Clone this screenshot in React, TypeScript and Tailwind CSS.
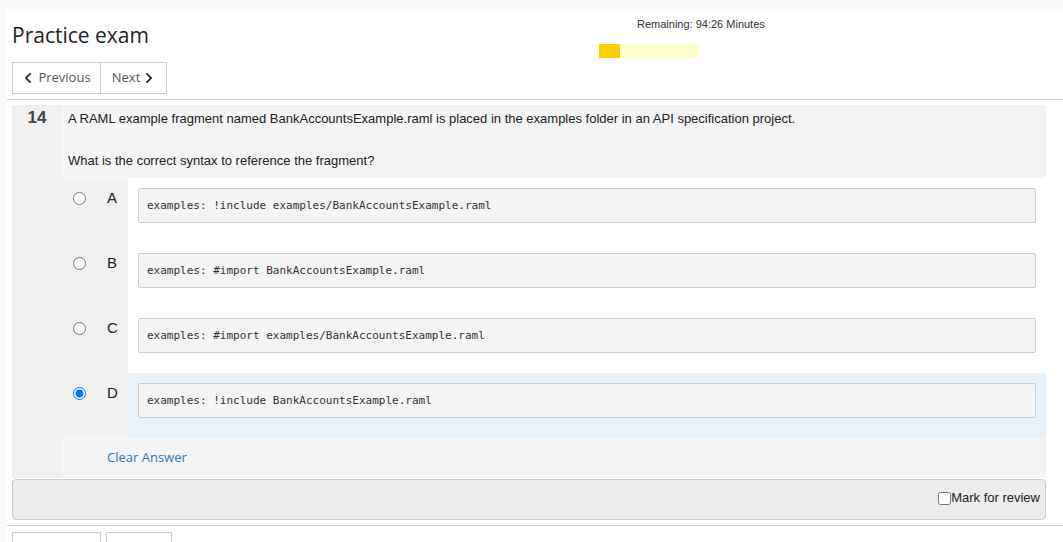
import { FaChevronLeft, FaChevronRight } from "react-icons/fa";

const options = [
  { key: "A", code: "examples: !include examples/BankAccountsExample.raml" },
  { key: "B", code: "examples: #import BankAccountsExample.raml" },
  { key: "C", code: "examples: #import examples/BankAccountsExample.raml" },
  { key: "D", code: "examples: !include BankAccountsExample.raml" },
];

const selected = "D";

function NavButtons() {
  return (
    <div className="flex font-['Open_Sans',sans-serif] text-[13px] text-[#555]">
      <button className="flex h-[32px] w-[89px] items-center justify-center gap-[4px] border border-[#ccc] bg-white">
        <FaChevronLeft className="text-[12px] text-[#333]" />
        Previous
      </button>
      <button className="-ml-px flex h-[32px] w-[67px] items-center justify-center gap-[3px] border border-[#ccc] bg-white">
        Next
        <FaChevronRight className="text-[12px] text-[#333]" />
      </button>
    </div>
  );
}

export default function App() {
  return (
    <div className="min-h-screen bg-[#f9f9f9] pl-[7px] pt-[9px] font-['Liberation_Sans',Arial,sans-serif] text-[#222]">
      <div className="bg-white">
        <div className="flex border-b border-[#d2d2d2] pb-[5px] pl-[5px]">
          <div className="w-[587px] shrink-0">
            <h1 className="pt-[11px] font-['Open_Sans',sans-serif] text-[21px] leading-[30px] text-[#222]">
              Practice exam
            </h1>
            <div className="mt-[12px]">
              <NavButtons />
            </div>
          </div>
          <div className="pt-[8px]">
            <div className="pl-[38px] text-[11px] leading-[14px] text-[#333]">Remaining: 94:26 Minutes</div>
            <div className="mt-[13px] flex h-[14px] w-[100px] bg-[#ffffcc]">
              <div className="w-[21px] bg-[#ffcc00]" />
            </div>
          </div>
        </div>

        <div className="pl-[5px] pr-[17px] pt-[5px]">
          <div className="flex">
            <div className="w-[50px] shrink-0 bg-[#f0f0f0] pt-[3px] text-center text-[17px] font-bold leading-[20px] text-[#444]">
              14
            </div>
            <div className="flex-1">
              <div className="h-[73px] bg-[#f4f4f4] px-[6px] pt-[5px] text-[13px] leading-[18px]">
                <p>
                  A RAML example fragment named BankAccountsExample.raml is placed in the examples folder in an API
                  specification project.
                </p>
                <p className="mt-[24px]">What is the correct syntax to reference the fragment?</p>
              </div>

              {options.map((o) => (
                <div key={o.key} className="flex h-[65px]">
                  <div className="flex w-[66px] shrink-0 bg-[#f0f0f0] pl-[11px] pt-[13px]">
                    <input
                      type="radio"
                      name="answer"
                      checked={o.key === selected}
                      readOnly
                      className="m-0 mt-[1px] h-[13px] w-[13px]"
                    />
                    <span className="ml-[21px] text-[15px] leading-[14px]">{o.key}</span>
                  </div>
                  <div className={`flex-1 px-[10px] pt-[10px] ${o.key === selected ? "bg-[#e8f0f8]" : "bg-white"}`}>
                    <div className="flex h-[35px] items-center rounded-[2px] border border-[#cccccc] bg-[#f4f4f4] px-[8px] pt-px font-['DejaVu_Sans_Mono',monospace] text-[11px] text-[#333]">
                      {o.code}
                    </div>
                  </div>
                </div>
              ))}

              <div className="flex h-[40px] items-center bg-[#f4f4f4] pl-[45px] font-['Open_Sans',sans-serif] text-[13px] text-[#337ab7]">
                Clear Answer
              </div>
            </div>
          </div>

          <div className="mt-px flex h-[41px] items-center justify-end rounded-[4px] border border-[#cccccc] bg-[#ececec] pb-[3px] pr-[5px] text-[13px]">
            <label className="flex items-center">
              <input type="checkbox" className="m-0 h-[13px] w-[13px]" />
              <span>Mark for review</span>
            </label>
          </div>
        </div>

        <div className="mt-[5px] border-t border-[#d2d2d2] pl-[5px] pt-[6px]">
          <div className="flex gap-[5px]">
            <div className="h-[32px] w-[89px] border border-[#ccc] bg-white" />
            <div className="h-[32px] w-[66px] border border-[#ccc] bg-white" />
          </div>
        </div>
      </div>
    </div>
  );
}
